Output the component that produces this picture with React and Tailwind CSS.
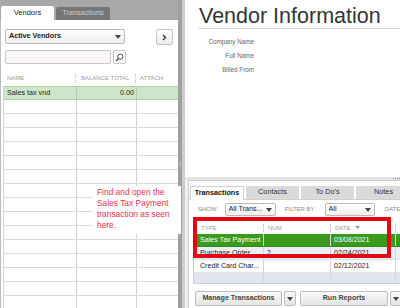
import React from "react";

const font = { fontFamily: '"Liberation Sans", Arial, sans-serif' };

function Caret({ className = "" }) {
    return (
        <svg width="6" height="4" viewBox="0 0 6 4" className={className}>
            <path d="M0 0h6L3 4z" fill="#444" />
        </svg>
    );
}

function Select({ label, className = "", bold = false }) {
    return (
        <div
            className={`flex items-center justify-between border border-[#b9b9b9] rounded-[2px] bg-gradient-to-b from-white to-[#eeeeee] px-[3px] ${className}`}
        >
            <span className={`text-[7.2px] text-[#222] truncate ${bold ? "font-bold" : ""}`}>{label}</span>
            <Caret />
        </div>
    );
}

function VendorTable() {
    const empty = Array.from({ length: 15 });
    const cols = "grid grid-cols-[73px_60px_42px]";
    return (
        <div className="mt-[7px] ml-[2px] w-[175px]">
            <div className={`${cols} h-[15px] items-center text-[6px] text-[#9a9a9a]`}>
                <div className="pl-[4px] border-r border-dotted border-[#bbb] h-[9px] leading-[9px]">NAME</div>
                <div className="pl-[5px] border-r border-dotted border-[#bbb] h-[9px] leading-[9px]">BALANCE TOTAL</div>
                <div className="pl-[4px] h-[9px] leading-[9px]">ATTACH</div>
            </div>
            <div className="border-l border-[#d6d6d6]">
                <div className={`${cols} h-[14px] bg-[#cde6c9] border-y border-[#aed2a8] items-center text-[7.2px] text-[#222]`}>
                    <div className="pl-[3px] border-r border-[#aed2a8] h-full leading-[12px]">Sales tax vnd</div>
                    <div className="pr-[2px] text-right border-r border-[#aed2a8] h-full leading-[12px]">0.00</div>
                    <div className="border-r border-[#aed2a8] h-full" />
                </div>
                {empty.map((_, i) => (
                    <div key={i} className={`${cols} h-[14px] border-b border-[#dcdcdc]`}>
                        <div className="border-r border-[#d2d2d2]" />
                        <div className="border-r border-[#d2d2d2]" />
                        <div className="border-r border-[#dcdcdc]" />
                    </div>
                ))}
            </div>
        </div>
    );
}

function LeftPanel() {
    return (
        <div className="w-[180px] flex flex-col bg-[#a8a8a8]">
            <div className="h-[20px] flex items-end gap-[2px] pl-[1px]">
                <div className="w-[53px] h-[14px] bg-white rounded-t-[2px] flex items-center justify-center text-[7.5px] text-[#222]">
                    Vendors
                </div>
                <div className="w-[54px] h-[13px] bg-[#767676] rounded-t-[2px] flex items-center justify-center text-[7.3px] text-[#cfcfcf]">
                    Transactions
                </div>
            </div>
            <div className="flex-1 bg-white border-l border-[#bdbdbd] pt-[9px] overflow-hidden">
                <div className="flex items-start">
                    <Select label="Active Vendors" bold className="ml-[4px] w-[120px] h-[15px]" />
                    <div className="ml-[31px] w-[17px] h-[16px] border border-[#c2c2c2] rounded-[2px] bg-gradient-to-b from-white to-[#ececec] flex items-center justify-center">
                        <svg width="5" height="7" viewBox="0 0 5 7">
                            <path d="M1 1l2.5 2.5L1 6" stroke="#333" strokeWidth="1.4" fill="none" />
                        </svg>
                    </div>
                </div>
                <div className="mt-[5px] flex items-center">
                    <div className="ml-[4px] w-[106px] h-[14px] border border-[#c6c6c6] rounded-[2px] bg-[#fbf6f6]" />
                    <div className="ml-[2px] w-[13px] h-[14px] border border-[#c6c6c6] rounded-[2px] bg-white flex items-center justify-center">
                        <svg width="9" height="9" viewBox="0 0 9 9">
                            <circle cx="5.3" cy="3.7" r="2.6" stroke="#444" strokeWidth="1" fill="none" />
                            <path d="M3.5 5.5L1 8" stroke="#444" strokeWidth="1.3" />
                        </svg>
                    </div>
                </div>
                <VendorTable />
            </div>
        </div>
    );
}

function Splitter() {
    return (
        <div className="w-[7px] flex">
            <div className="w-[4px] bg-[#a0a0a0] flex flex-col items-center">
                <div className="mt-[162px] flex flex-col gap-[1px]">
                    <div className="w-[1px] h-[1px] bg-[#eee]" />
                    <div className="w-[1px] h-[1px] bg-[#eee]" />
                    <div className="w-[1px] h-[1px] bg-[#eee]" />
                </div>
            </div>
            <div className="w-[3px] bg-[#cdcdcd]" />
        </div>
    );
}

function TxnTable() {
    const cols = "grid grid-cols-[70px_67px_65px_1fr]";
    const rows = [
        { type: "Sales Tax Payment", num: "", date: "03/08/2021", bg: "bg-[#3a9a1d] text-white border-[#2f8a16]" },
        { type: "Purchase Order ...", num: "2", date: "02/24/2021", bg: "bg-[#e9eff7] text-[#222] border-[#dde3ec]" },
        { type: "Credit Card Char...", num: "", date: "02/12/2021", bg: "bg-white text-[#222] border-[#e2e2e2]" },
    ];
    return (
        <div className="mt-[5px] ml-[4px] border-l border-b border-[#cfcfcf]">
            <div className={`${cols} h-[13px] items-center text-[6px] text-[#999]`}>
                <div className="pl-[7px] border-r border-dotted border-[#bbb] h-[8px] leading-[8px]">TYPE</div>
                <div className="pl-[4px] border-r border-dotted border-[#bbb] h-[8px] leading-[8px]">NUM</div>
                <div className="pl-[4px] border-r border-dotted border-[#bbb] h-[8px] leading-[8px] flex items-center gap-[4px]">
                    DATE
                    <svg width="5" height="3" viewBox="0 0 5 3">
                        <path d="M0 0h5L2.5 3z" fill="#999" />
                    </svg>
                </div>
                <div />
            </div>
            {rows.map((r) => (
                <div key={r.type} className={`${cols} h-[13px] items-center text-[7.1px] border-b ${r.bg}`}>
                    <div className="pl-[6px] h-full leading-[12px] border-r border-[#d6d6d6] truncate">{r.type}</div>
                    <div className="pl-[3px] h-full leading-[12px] border-r border-[#d6d6d6]">{r.num}</div>
                    <div className="pl-[3px] h-full leading-[12px] border-r border-[#d6d6d6]">{r.date}</div>
                    <div />
                </div>
            ))}
            <div className={`${cols} h-[10px] bg-[#dfe6f0]`}>
                <div className="border-r border-[#d0d6e0]" />
                <div className="border-r border-[#d0d6e0]" />
                <div className="border-r border-[#d0d6e0]" />
                <div />
            </div>
        </div>
    );
}

function Button({ label, className = "" }) {
    return (
        <div
            className={`h-[15px] border border-[#bdbdbd] rounded-[2px] bg-gradient-to-b from-[#fafafa] to-[#e4e4e4] flex items-center justify-center text-[7.1px] font-bold text-[#444] ${className}`}
        >
            {label}
        </div>
    );
}

function RightPanel() {
    return (
        <div className="flex-1 flex flex-col bg-white">
            <div className="flex-1 pl-[13px]">
                <div className="h-[29px] border-b border-[#dadada] pt-[3.5px] text-[21.5px] leading-[24px] text-[#353535] pl-[1px]">
                    Vendor Information
                </div>
                <div className="pt-[6px] w-[56px] text-right text-[6.3px] leading-[14px] text-[#666]">
                    <div>Company Name</div>
                    <div>Full Name</div>
                    <div>Billed From</div>
                </div>
            </div>
            <div className="h-[3px] bg-[#e4e4e4] flex justify-end items-center pr-[2px] gap-[1px]">
                {Array.from({ length: 4 }).map((_, i) => (
                    <div key={i} className="w-[1px] h-[1px] bg-[#888]" />
                ))}
            </div>
            <div className="h-[128px] flex pl-[3px] bg-[#f0f0f0]">
                <div className="flex-1 bg-white border-l border-t border-[#cccccc] overflow-hidden">
                    <div className="mt-[5px] h-[14px] flex items-end gap-[2px] pl-[1px] border-b border-[#cfcfcf]">
                        <div className="w-[54px] h-[14px] bg-white border border-b-0 border-[#cfcfcf] flex items-center justify-center text-[7.2px] font-semibold text-[#111] -mb-px">
                            Transactions
                        </div>
                        <div className="w-[53px] h-[13px] bg-[#dadada] flex items-center justify-center text-[7.3px] text-[#333]">
                            Contacts
                        </div>
                        <div className="w-[53px] h-[13px] bg-[#dadada] flex items-center justify-center text-[7.3px] text-[#333]">
                            To Do's
                        </div>
                        <div className="flex-1 h-[13px] bg-[#dadada] flex items-center pl-[18px] text-[7.3px] text-[#333]">
                            Notes
                        </div>
                    </div>
                    <div className="mt-[3px] flex items-center h-[13px]">
                        <span className="ml-[9px] text-[6px] text-[#888]">SHOW</span>
                        <Select label="All Trans..." className="ml-[8px] w-[51px] h-[13px]" />
                        <span className="ml-[9px] text-[6px] text-[#888]">FILTER BY</span>
                        <Select label="All" className="ml-[10px] w-[50px] h-[13px]" />
                        <span className="ml-[10px] text-[6px] text-[#888]">DATE</span>
                    </div>
                    <TxnTable />
                    <div className="mt-[7px] flex items-center">
                        <Button label="Manage Transactions" className="ml-[6px] w-[87px]" />
                        <Button label={<Caret />} className="ml-[2px] w-[12px]" />
                        <Button label="Run Reports" className="ml-[4px] w-[88px]" />
                        <Button label={<Caret />} className="ml-[2px] w-[12px]" />
                    </div>
                </div>
            </div>
        </div>
    );
}

export default function App() {
    return (
        <div style={font} className="relative w-[400px] h-[308px] flex overflow-hidden bg-white">
            <LeftPanel />
            <Splitter />
            <RightPanel />

            <div className="absolute left-[93px] top-[186px] w-[88px] h-[48px] bg-white pl-[4px] pt-[1px] text-[8.4px] leading-[11px] text-[#e8334a]">
                Find and open the
                <br />
                Sales Tax Payment
                <br />
                transaction as seen
                <br />
                here.
            </div>

            <div className="absolute left-[193px] top-[217px] w-[198px] h-[41px] border-[4px] border-[#e30613]" />
        </div>
    );
}
